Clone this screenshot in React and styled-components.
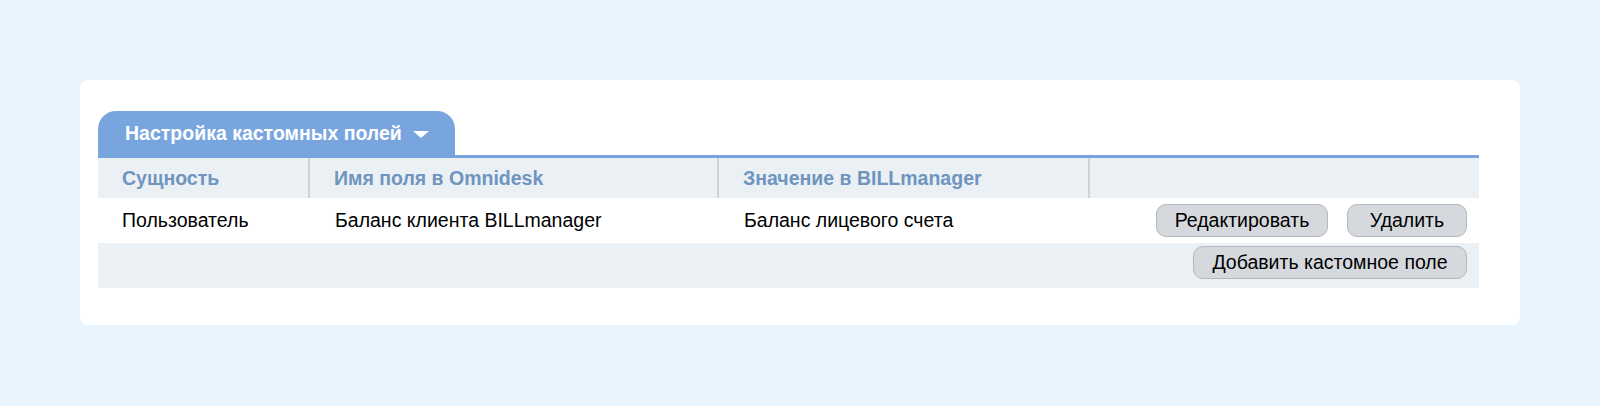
import React from "react";
import styled, { createGlobalStyle } from "styled-components";

const GlobalStyle = createGlobalStyle`
  html, body {
    margin: 0;
    padding: 0;
    background: #e9f5fe;
    font-family: "Liberation Sans", Arial, sans-serif;
  }
`;

const Page = styled.div`
  padding: 80px 80px 0 80px;
`;

const Card = styled.div`
  background: #fff;
  border-radius: 8px;
  height: 245px;
  box-sizing: border-box;
  padding: 31px 41px 0 18px;
`;

const TabBar = styled.div`
  display: flex;
  border-bottom: 3px solid #79a5df;
`;

const Tab = styled.div`
  display: flex;
  align-items: center;
  gap: 11px;
  height: 44px;
  padding: 0 26px 0 27px;
  background: #79a5df;
  border-radius: 18px 18px 0 0;
  color: #fff;
  font-size: 19.5px;
  font-weight: bold;
`;

const Caret = styled.span`
  width: 0;
  height: 0;
  border-left: 8px solid transparent;
  border-right: 8px solid transparent;
  border-top: 7px solid #fff;
  margin-top: 2px;
`;

const Table = styled.table`
  width: 100%;
  table-layout: fixed;
  border-collapse: collapse;
  font-size: 19.5px;
`;

const HeadCell = styled.th`
  box-sizing: border-box;
  height: 40px;
  padding: 0 0 0 ${p => (p.$first ? "24px" : "24px")};
  text-align: left;
  background: #ebf0f5;
  color: #6f95bf;
  font-weight: bold;
  white-space: nowrap;
  width: ${p => p.$w || "auto"};
  border-left: ${p => (p.$first ? "none" : "2px solid #cdd2d7")};
`;

const Row = styled.tr`
  height: 45px;
  background: ${p => (p.$shade ? "#ebf0f5" : "#fff")};
`;

const Cell = styled.td`
  box-sizing: border-box;
  padding: 0 0 0 ${p => (p.$first ? "24px" : "26px")};
  color: #000;
  white-space: nowrap;
  vertical-align: middle;
`;

const ActionCell = styled.td`
  box-sizing: border-box;
  padding: ${p => (p.$top ? "3px 12px 0 0" : "0 12px 0 0")};
  vertical-align: ${p => (p.$top ? "top" : "middle")};
  text-align: right;
`;

const Actions = styled.div`
  display: flex;
  justify-content: flex-end;
  gap: 19px;
`;

const Button = styled.button`
  height: 33px;
  padding: 0;
  background: #d5d9de;
  border: 1px solid #b3b8be;
  border-radius: 10px;
  font-family: inherit;
  font-size: 19.5px;
  color: #000;
  width: ${p => p.$w};
`;

export default function App() {
  return (
    <Page>
      <GlobalStyle />
      <Card>
        <TabBar>
          <Tab>
            Настройка кастомных полей
            <Caret />
          </Tab>
        </TabBar>
        <Table>
          <thead>
            <tr>
              <HeadCell $first $w="211px">Сущность</HeadCell>
              <HeadCell $w="409px">Имя поля в Omnidesk</HeadCell>
              <HeadCell $w="371px">Значение в BILLmanager</HeadCell>
              <HeadCell />
            </tr>
          </thead>
          <tbody>
            <Row>
              <Cell $first>Пользователь</Cell>
              <Cell>Баланс клиента BILLmanager</Cell>
              <Cell>Баланс лицевого счета</Cell>
              <ActionCell>
                <Actions>
                  <Button $w="172px">Редактировать</Button>
                  <Button $w="120px">Удалить</Button>
                </Actions>
              </ActionCell>
            </Row>
            <Row $shade>
              <Cell $first />
              <Cell />
              <Cell />
              <ActionCell $top>
                <Actions>
                  <Button $w="274px">Добавить кастомное поле</Button>
                </Actions>
              </ActionCell>
            </Row>
          </tbody>
        </Table>
      </Card>
    </Page>
  );
}
